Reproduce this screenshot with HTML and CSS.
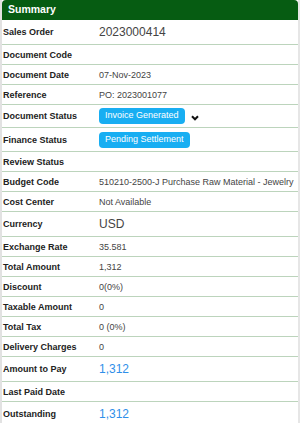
FILE: index.html
```html
<!DOCTYPE html>
<html>
<head>
<meta charset="utf-8">
<link rel="stylesheet" href="styles.css">
</head>
<body>
<div class="card">
  <div class="card-header">Summary</div>
  <div class="rows">
    <div class="row big"><div class="label">Sales Order</div><div class="value large">2023000414</div></div>
    <div class="row"><div class="label">Document Code</div><div class="value"></div></div>
    <div class="row"><div class="label">Document Date</div><div class="value">07-Nov-2023</div></div>
    <div class="row"><div class="label">Reference</div><div class="value">PO: 2023001077</div></div>
    <div class="row mid"><div class="label">Document Status</div><div class="value"><span class="badge">Invoice Generated</span><svg class="chev" width="8" height="6" viewBox="0 0 8 6"><polyline points="1,1.2 4,4.3 7,1.2" fill="none" stroke="#111" stroke-width="2"/></svg></div></div>
    <div class="row mid2"><div class="label">Finance Status</div><div class="value"><span class="badge">Pending Settlement</span></div></div>
    <div class="row"><div class="label">Review Status</div><div class="value"></div></div>
    <div class="row"><div class="label">Budget Code</div><div class="value">510210-2500-J Purchase Raw Material - Jewelry</div></div>
    <div class="row"><div class="label">Cost Center</div><div class="value">Not Available</div></div>
    <div class="row big"><div class="label">Currency</div><div class="value large">USD</div></div>
    <div class="row"><div class="label">Exchange Rate</div><div class="value">35.581</div></div>
    <div class="row"><div class="label">Total Amount</div><div class="value">1,312</div></div>
    <div class="row"><div class="label">Discount</div><div class="value">0(0%)</div></div>
    <div class="row"><div class="label">Taxable Amount</div><div class="value">0</div></div>
    <div class="row"><div class="label">Total Tax</div><div class="value">0 (0%)</div></div>
    <div class="row"><div class="label">Delivery Charges</div><div class="value">0</div></div>
    <div class="row big"><div class="label">Amount to Pay</div><div class="value large blue">1,312</div></div>
    <div class="row"><div class="label">Last Paid Date</div><div class="value"></div></div>
    <div class="row big"><div class="label">Outstanding</div><div class="value large blue">1,312</div></div>
  </div>
</div>
</body>
</html>
```

FILE: styles.css
```css
html, body {
  margin: 0;
  padding: 0;
  background: #ffffff;
}
body {
  font-family: "Liberation Sans", Arial, sans-serif;
  width: 300px;
  height: 423px;
  overflow: hidden;
}
.card {
  border-left: 2px solid #e2e2e2;
  border-right: 2px solid #e6e6e6;
  min-height: 440px;
  box-sizing: border-box;
}
.card-header {
  background: #065c12;
  color: #ffffff;
  font-weight: bold;
  font-size: 10.5px;
  height: 20px;
  line-height: 19px;
  padding-left: 6px;
  border-radius: 4px 4px 0 0;
}
.rows {
  display: flex;
  flex-direction: column;
}
.row {
  display: flex;
  align-items: center;
  height: 19px;
  border-bottom: 1px solid #bcd4bc;
}
.row.big { height: 24px; }
.row.mid { height: 22px; }
.row.mid2 { height: 23px; }
.label {
  width: 97px;
  padding-left: 1px;
  box-sizing: border-box;
  font-weight: bold;
  font-size: 9px;
  color: #222222;
  flex-shrink: 0;
}
.value {
  display: flex;
  align-items: center;
  font-size: 9px;
  color: #444444;
  white-space: nowrap;
}
.value.large {
  font-size: 12px;
  color: #444444;
}
.value.blue {
  color: #2f8fe9;
}
.badge {
  display: inline-block;
  background: #18aef2;
  color: #ffffff;
  font-size: 9px;
  height: 16px;
  line-height: 15px;
  padding: 0 6px;
  border-radius: 4px;
}
.chev {
  margin-left: 6px;
  margin-top: 3px;
}
```
